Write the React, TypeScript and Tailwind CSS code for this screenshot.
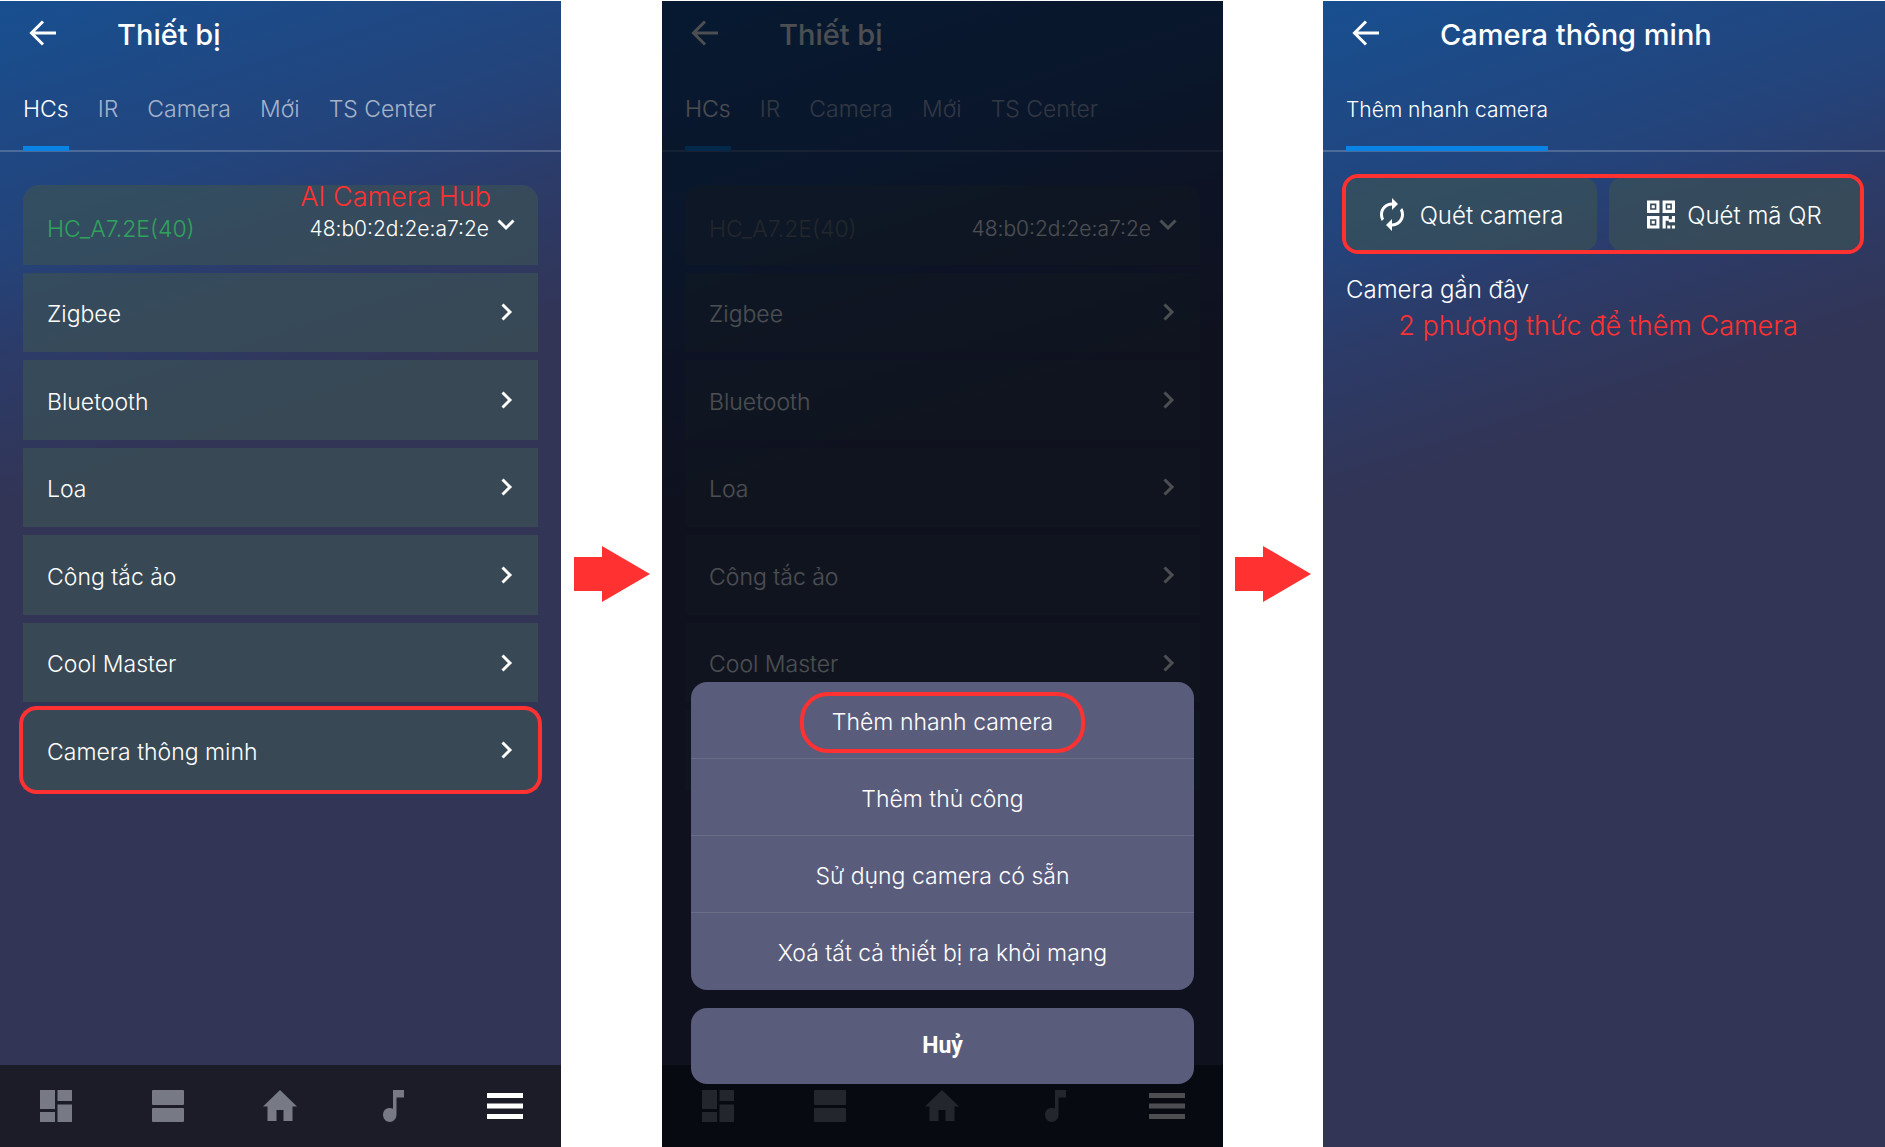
import type { ReactNode } from "react";

const screenBg =
  "bg-[linear-gradient(162deg,#184f90_0%,#24437a_19%,#2c3b68_27%,#323556_38%)]";

const deviceGroups = ["Zigbee", "Bluetooth", "Loa", "Công tắc ảo", "Cool Master", "Camera thông minh"];

const sheetActions = [
  "Thêm nhanh camera",
  "Thêm thủ công",
  "Sử dụng camera có sẵn",
  "Xoá tất cả thiết bị ra khỏi mạng",
];

function BackIcon() {
  return (
    <svg viewBox="0 0 27 26" className="w-[27px] h-[26px]" fill="none" stroke="currentColor" strokeWidth="3">
      <path d="M14 1.5 2.5 13 14 24.5M2.5 13H27" />
    </svg>
  );
}

function ChevronRight() {
  return (
    <svg viewBox="0 0 12 18" className="w-3 h-[18px]" fill="none" stroke="currentColor" strokeWidth="3">
      <path d="M1.5 1.5 9 9l-7.5 7.5" />
    </svg>
  );
}

function ChevronDown() {
  return (
    <svg viewBox="0 0 18 12" className="w-[18px] h-3" fill="none" stroke="currentColor" strokeWidth="3">
      <path d="M1.5 1.5 9 9l7.5-7.5" />
    </svg>
  );
}

function SyncIcon() {
  return (
    <svg viewBox="4 1 16 22" className="w-[24px] h-[33px]" fill="currentColor">
      <path d="M12 6v3l4-4-4-4v3c-4.42 0-8 3.58-8 8 0 1.57.46 3.03 1.24 4.26L6.7 14.8A5.87 5.87 0 0 1 6 12c0-3.31 2.69-6 6-6zm6.76 1.74L17.3 9.2c.44.84.7 1.79.7 2.8 0 3.31-2.69 6-6 6v-3l-4 4 4 4v-3c4.42 0 8-3.58 8-8 0-1.57-.46-3.03-1.24-4.26z" />
    </svg>
  );
}

function QrIcon() {
  return (
    <svg viewBox="3 3 18 18" className="w-[28px] h-[29px]" fill="currentColor">
      <path d="M3 11h8V3H3v8zm2-6h4v4H5V5zM3 21h8v-8H3v8zm2-6h4v4H5v-4zM13 3v8h8V3h-8zm6 6h-4V5h4v4zM6 6h2v2H6zM16 6h2v2h-2zM6 16h2v2H6zM13 13h4v2h2v-2h2v4h-4v-1h-2v5h-2zM16 19h2v2h-2zM19 19h2v2h-2z" />
    </svg>
  );
}

function StepArrow() {
  return (
    <svg viewBox="0 0 76 56" className="w-[76px] h-[56px] place-self-center" fill="#ff3131">
      <path d="M0 11h28V0l48 28-48 28V45H0z" />
    </svg>
  );
}

const navIcons: { label: string; icon: ReactNode }[] = [
  {
    label: "Bảng điều khiển",
    icon: <path d="M2 2h15v19H2zM19.500 2H34v11H19.500zM2 24h15v10H2zM19.500 16.500H34V34H19.500z" />,
  },
  {
    label: "Phòng",
    icon: <path d="M3 2h30a1 1 0 0 1 1 1v13a1 1 0 0 1-1 1H3a1 1 0 0 1-1-1V3a1 1 0 0 1 1-1zM3 20h30a1 1 0 0 1 1 1v12a1 1 0 0 1-1 1H3a1 1 0 0 1-1-1V21a1 1 0 0 1 1-1z" />,
  },
  {
    label: "Trang chủ",
    icon: <path d="M18 2 35 18.500h-4.500V33h-9V22h-7v11h-9V18.500H1z" />,
  },
  {
    label: "Nhạc",
    icon: <path d="M18 2h11v7.500h-7.500V27A6.800 7 0 1 1 18 20.800z" />,
  },
  {
    label: "Menu",
    icon: <path d="M0 5h36v5H0zM0 15.500h36v5H0zM0 26h36v5H0z" />,
  },
];

function BottomNav() {
  return (
    <nav className="mt-auto grid grid-cols-5 h-[82px] bg-[#1c1c28]">
      {navIcons.map(({ label, icon }) => (
        <button
          key={label}
          aria-label={label}
          className="flex items-center justify-center text-[#777a84] last:text-white"
        >
          <svg viewBox="0 0 36 36" className="size-9" fill="currentColor">
            {icon}
          </svg>
        </button>
      ))}
    </nav>
  );
}

function Header({ title }: { title: string }) {
  return (
    <header className="flex items-center h-[72px] pb-1 pl-[29px] gap-[61px]">
      <button aria-label="Quay lại" className="pb-1">
        <BackIcon />
      </button>
      <h1 className="text-[29px] leading-8 font-medium">{title}</h1>
    </header>
  );
}

function Tabs({ items, size }: { items: string[]; size: string }) {
  return (
    <nav className="flex h-[79px] gap-[29px] pl-[23px] border-b-2 border-white/20">
      {items.map((item, i) => (
        <button
          key={item}
          className={`-mb-px border-b-[5px] font-light ${size} ${
            i === 0 ? "border-[#0a84e4] text-white" : "border-transparent text-white/60"
          }`}
        >
          {item}
        </button>
      ))}
    </nav>
  );
}

function DevicesScreen({ annotated = false }: { annotated?: boolean }) {
  const cardBg = annotated ? "bg-[#3b5156]/70" : "bg-[#3b5156]/40";

  return (
    <div className={`flex flex-col flex-1 ${screenBg}`}>
      <Header title="Thiết bị" />
      <Tabs items={["HCs", "IR", "Camera", "Mới", "TS Center"]} size="text-[23px]" />
      <div className="grid grid-rows-7 gap-2 h-[605px] mt-[33px] mx-[23px] text-[23px] font-light">
        <button className={`relative flex items-center pl-6 pr-[23px] rounded-t-2xl ${cardBg}`}>
          <span className={`pt-2 ${annotated ? "text-[#2fa35c]" : "text-[#757b80]"}`}>HC_A7.2E(40)</span>
          <span className="ml-auto mr-2 pt-2 text-[21px]">48:b0:2d:2e:a7:2e</span>
          <ChevronDown />
          {annotated && (
            <span className="absolute top-0 right-[47px] text-[27px] leading-6 text-[#ff3131]">AI Camera Hub</span>
          )}
        </button>
        {deviceGroups.map((name, i) => (
          <button key={name} className={`relative flex items-center justify-between pl-6 pr-[25px] ${cardBg}`}>
            <span className="pt-1">{name}</span>
            <ChevronRight />
            {annotated && i === deviceGroups.length - 1 && (
              <span className="absolute -inset-1 border-4 border-[#ff3131] rounded-[18px]" />
            )}
          </button>
        ))}
      </div>
      <BottomNav />
    </div>
  );
}

function ActionSheet() {
  return (
    <div className="absolute inset-0 flex flex-col justify-end gap-[18px] px-[29px] pb-[63px] bg-[#000308]/70">
      <div className="rounded-2xl bg-[#5a5c7c] divide-y divide-[#6a6d88]">
        {sheetActions.map((action, i) => (
          <button key={action} className="flex items-center justify-center w-full h-[77px] pt-1 text-[23px] font-light">
            {i === 0 ? (
              <span className="flex items-center h-[61px] px-7 border-4 border-[#ff3131] rounded-[28px]">{action}</span>
            ) : (
              action
            )}
          </button>
        ))}
      </div>
      <button className="h-[76px] rounded-2xl bg-[#5a5c7c] font-[Roboto,sans-serif] text-[23px] font-bold">Huỷ</button>
    </div>
  );
}

function CameraScreen() {
  return (
    <div className={`flex flex-col ${screenBg}`}>
      <Header title="Camera thông minh" />
      <Tabs items={["Thêm nhanh camera"]} size="text-[21px]" />
      <div className="ml-[19px] mr-[21px] mt-[22px] grid grid-cols-2 gap-3 border-4 border-[#ff3131] rounded-2xl text-[24px] font-light">
        <button className="flex items-center justify-center gap-4 h-[72px] rounded-xl bg-[#3b5156]/70">
          <SyncIcon />
          <span className="pt-1">Quét camera</span>
        </button>
        <button className="flex items-center justify-center gap-3 h-[72px] rounded-xl bg-[#3b5156]/70">
          <QrIcon />
          <span className="pt-1">Quét mã QR</span>
        </button>
      </div>
      <h2 className="mt-5 ml-[23px] text-[24px] leading-8 font-light">Camera gần đây</h2>
      <p className="mt-1 pr-3 text-center text-[27px] leading-8 font-light text-[#ff3131]">
        2 phương thức để thêm Camera
      </p>
    </div>
  );
}

export default function App() {
  return (
    <main className="grid grid-cols-[561fr_101fr_561fr_100fr_562fr] min-h-screen pt-px bg-white text-white font-[Inter,sans-serif]">
      <section className="flex">
        <DevicesScreen annotated />
      </section>
      <StepArrow />
      <section className="relative flex">
        <DevicesScreen />
        <ActionSheet />
      </section>
      <StepArrow />
      <CameraScreen />
    </main>
  );
}
